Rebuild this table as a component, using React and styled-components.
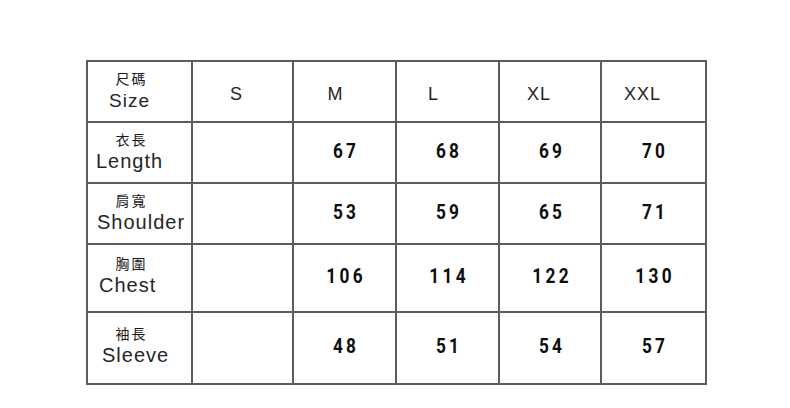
import React from "react";
import styled, { createGlobalStyle } from "styled-components";

const GlobalStyle = createGlobalStyle`
  body {
    margin: 0;
    background: #fff;
    font-family: "Liberation Sans", Arial, sans-serif;
  }
`;

const sizes = [
  { label: "S", shift: -12 },
  { label: "M", shift: -18 },
  { label: "L", shift: -28 },
  { label: "XL", shift: -22 },
  { label: "XXL", shift: -22 },
];

const rows = [
  { zh: "衣長", en: "Length", indent: 8, height: 61, values: ["", "67", "68", "69", "70"] },
  { zh: "肩寬", en: "Shoulder", indent: 9, height: 61, values: ["", "53", "59", "65", "71"] },
  { zh: "胸圍", en: "Chest", indent: 11, height: 68, values: ["", "106", "114", "122", "130"] },
  { zh: "袖長", en: "Sleeve", indent: 14, height: 72, values: ["", "48", "51", "54", "57"] },
];

function App() {
  return (
    <Page>
      <GlobalStyle />
      <Table>
        <LabelCell $height={61}>
          <Zh>尺碼</Zh>
          <En $indent={21} $size={19}>Size</En>
        </LabelCell>
        {sizes.map((s) => (
          <HeadCell key={s.label} $shift={s.shift}>
            {s.label}
          </HeadCell>
        ))}
        {rows.map((row) => (
          <React.Fragment key={row.en}>
            <LabelCell $height={row.height}>
              <Zh>{row.zh}</Zh>
              <En $indent={row.indent}>{row.en}</En>
            </LabelCell>
            {row.values.map((v, i) => (
              <NumCell key={i}>{v && <Num>{v}</Num>}</NumCell>
            ))}
          </React.Fragment>
        ))}
      </Table>
    </Page>
  );
}

export default App;

const Page = styled.div`
  padding: 60px 0 0 86px;
  height: 408px;
  box-sizing: border-box;
`;

const Table = styled.div`
  display: grid;
  grid-template-columns: 105px 101px 103px 103px 102px 105px;
  grid-template-rows: 61px 61px 61px 68px 72px;
  width: max-content;
  border-top: 2px solid #5c5c5c;
  border-left: 2px solid #5c5c5c;
`;

const Cell = styled.div`
  box-sizing: border-box;
  border-right: 2px solid #5c5c5c;
  border-bottom: 2px solid #5c5c5c;
  display: flex;
  align-items: center;
`;

const LabelCell = styled(Cell)`
  flex-direction: column;
  align-items: stretch;
  justify-content: center;
  padding-bottom: ${(p) => (p.$height > 65 ? 4 : 1)}px;
`;

const Zh = styled.div`
  font-family: "Noto Sans CJK TC", "Noto Sans CJK SC", sans-serif;
  font-size: 14px;
  line-height: 15px;
  letter-spacing: 2px;
  color: #1a1a1a;
  text-align: center;
  padding-right: 16px;
  margin-bottom: 4px;
`;

const En = styled.div`
  font-family: "Liberation Sans", Arial, sans-serif;
  font-size: ${(p) => p.$size || 20}px;
  line-height: 21px;
  letter-spacing: 1px;
  color: #262626;
  padding-left: ${(p) => p.$indent}px;
  white-space: nowrap;
`;

const HeadCell = styled(Cell)`
  justify-content: center;
  padding-left: ${(p) => (p.$shift < 0 ? 0 : p.$shift)}px;
  padding-right: ${(p) => (p.$shift < 0 ? -p.$shift : 0)}px;
  padding-top: 5px;
  font-family: "Liberation Sans", Arial, sans-serif;
  font-size: 18px;
  letter-spacing: 1px;
  color: #262626;
`;

const NumCell = styled(Cell)`
  justify-content: center;
  padding-left: 4px;
  padding-bottom: 4px;
`;

const Num = styled.span`
  display: inline-block;
  font-family: Roboto, "DejaVu Sans", sans-serif;
  font-weight: 700;
  font-size: 21px;
  letter-spacing: 4px;
  color: #0d0d0d;
  transform: scaleX(0.82);
`;
